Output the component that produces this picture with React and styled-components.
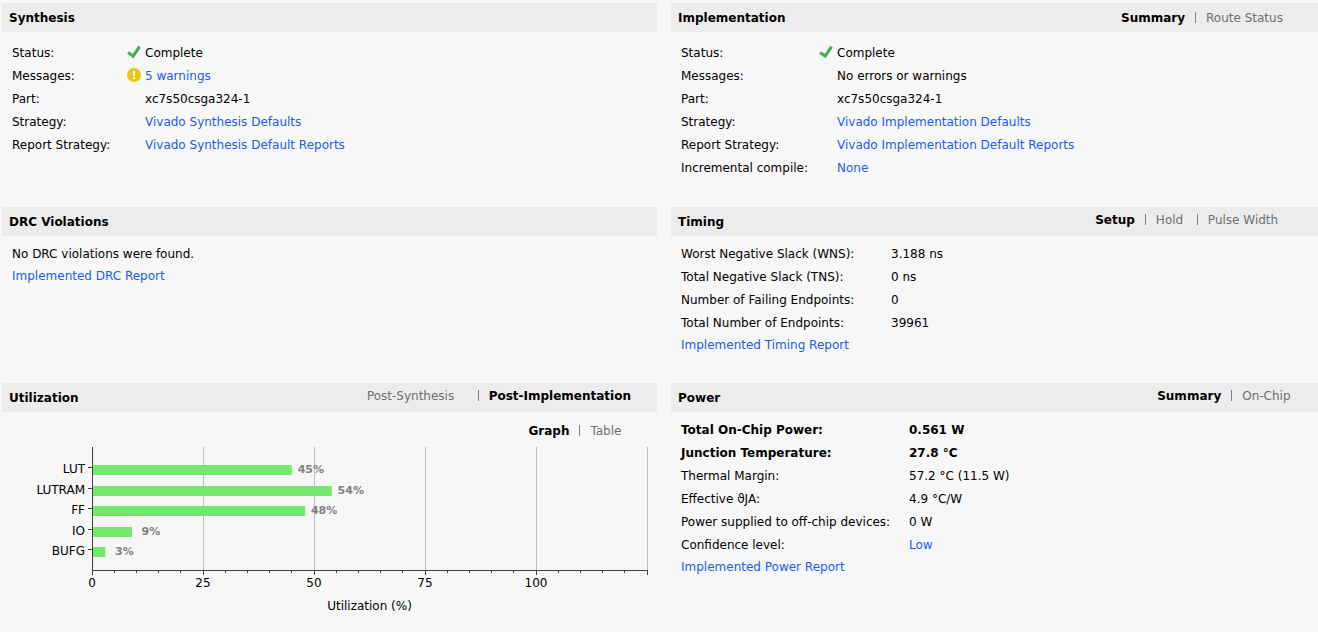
import React, { useState } from "react";
import styled, { createGlobalStyle } from "styled-components";

const GlobalStyle = createGlobalStyle`
  * { box-sizing: border-box; }
  body {
    margin: 0;
    background: #f7f7f7;
    color: #000;
    font: 12px/23px "DejaVu Sans", Verdana, sans-serif;
  }
`;

const Dashboard = styled.main`
  display: grid;
  grid-template-columns: 655fr 647fr;
  grid-template-rows: minmax(204px, auto) minmax(176px, auto) auto;
  column-gap: 14px;
  padding: 3px 0 0 2px;
`;

const Panel = styled.section`
  min-width: 0;
`;

const PanelHeader = styled.header`
  display: flex;
  justify-content: space-between;
  height: 29px;
  padding-left: 7px;
  background: #ececec;
`;

const Title = styled.h2`
  margin: 0;
  padding-top: 2px;
  font-size: 12px;
  line-height: 27px;
`;

const TabBar = styled.nav`
  display: flex;
  justify-content: flex-end;
  align-items: center;
  height: ${(p) => p.$height}px;
  padding-right: ${(p) => p.$inset}px;
`;

const Divider = styled.span`
  width: 1px;
  height: 11px;
  margin: 0 10px;
  background: #7c8084;
`;

/* The hidden bold copy keeps a tab's width the same in both states. */
const Tab = styled.button`
  display: inline-grid;
  padding: 2px 0 0;
  border: 0;
  background: none;
  font: inherit;
  line-height: 19px;
  text-align: left;
  cursor: pointer;
  font-weight: ${(p) => (p.$active ? 700 : 400)};
  color: ${(p) => (p.$active ? "#000" : "#6e6e6e")};

  &::after {
    content: attr(data-label);
    height: 0;
    overflow: hidden;
    visibility: hidden;
    font-weight: 700;
  }
`;

const PanelBody = styled.div`
  padding: ${(p) => p.$top}px 0 0 10px;
`;

const Properties = styled.dl`
  display: grid;
  grid-template-columns: ${(p) => p.$label}px 1fr;
  margin: 0;
`;

const Name = styled.dt`
  white-space: nowrap;
  font-weight: ${(p) => (p.$strong ? 700 : 400)};
`;

const Value = styled.dd`
  display: flex;
  align-items: center;
  margin: 0;
  white-space: nowrap;
  font-weight: ${(p) => (p.$strong ? 700 : 400)};
`;

const IconSlot = styled.span`
  display: flex;
  flex: none;
  width: 18px;
  padding-bottom: 3px;
`;

const Link = styled.a`
  color: #1e5af5;
  text-decoration: none;
  &:hover { text-decoration: underline; }
`;

const Message = styled.p`
  margin: 0;
`;

const ReportLink = styled(Link)`
  display: block;
  width: fit-content;
  line-height: 20px;
`;

const Chart = styled.svg`
  display: block;
  max-width: 100%;
`;

const BarLabel = styled.text`
  font-size: 11px;
  font-weight: 700;
  fill: #808080;
`;

const CheckIcon = () => (
  <svg width="14" height="14" viewBox="0 0 14 14" role="img" aria-label="Complete">
    <path d="M1 7.4 6.2 11 12.5 1.6" fill="none" stroke="#3fb24f" strokeWidth="3.1" />
  </svg>
);

const WarningIcon = () => (
  <svg width="14" height="14" viewBox="0 0 14 14" role="img" aria-label="Warning">
    <circle cx="7" cy="7" r="7" fill="#ecc414" />
    <path d="M6 2.8H8L7.8 8H6.2Z" fill="#fff" />
    <rect x="6" y="9" width="2" height="2" fill="#fff" />
  </svg>
);

function Tabs({ items, initial, inset, height = 25, label }) {
  const [active, setActive] = useState(initial);
  return (
    <TabBar aria-label={label} $inset={inset} $height={height}>
      {items.map((item, i) => (
        <React.Fragment key={item}>
          {i > 0 && <Divider />}
          <Tab
            type="button"
            data-label={item}
            aria-pressed={item === active}
            $active={item === active}
            onClick={() => setActive(item)}
          >
            {item}
          </Tab>
        </React.Fragment>
      ))}
    </TabBar>
  );
}

function PropertyList({ rows, label, icons }) {
  return (
    <Properties $label={label}>
      {rows.map(({ name, value, icon, link, strong }) => (
        <React.Fragment key={name}>
          <Name $strong={strong}>{name}</Name>
          <Value $strong={strong}>
            {icons && <IconSlot>{icon}</IconSlot>}
            {link ? <Link href="#">{value}</Link> : value}
          </Value>
        </React.Fragment>
      ))}
    </Properties>
  );
}

const synthesis = [
  { name: "Status:", value: "Complete", icon: <CheckIcon /> },
  { name: "Messages:", value: "5 warnings", icon: <WarningIcon />, link: true },
  { name: "Part:", value: "xc7s50csga324-1" },
  { name: "Strategy:", value: "Vivado Synthesis Defaults", link: true },
  { name: "Report Strategy:", value: "Vivado Synthesis Default Reports", link: true },
];

const implementation = [
  { name: "Status:", value: "Complete", icon: <CheckIcon /> },
  { name: "Messages:", value: "No errors or warnings" },
  { name: "Part:", value: "xc7s50csga324-1" },
  { name: "Strategy:", value: "Vivado Implementation Defaults", link: true },
  { name: "Report Strategy:", value: "Vivado Implementation Default Reports", link: true },
  { name: "Incremental compile:", value: "None", link: true },
];

const timing = [
  { name: "Worst Negative Slack (WNS):", value: "3.188 ns" },
  { name: "Total Negative Slack (TNS):", value: "0 ns" },
  { name: "Number of Failing Endpoints:", value: "0" },
  { name: "Total Number of Endpoints:", value: "39961" },
];

const power = [
  { name: "Total On-Chip Power:", value: "0.561 W", strong: true },
  { name: "Junction Temperature:", value: "27.8 °C", strong: true },
  { name: "Thermal Margin:", value: "57.2 °C (11.5 W)" },
  { name: "Effective ϑJA:", value: "4.9 °C/W" },
  { name: "Power supplied to off-chip devices:", value: "0 W" },
  { name: "Confidence level:", value: "Low", link: true },
];

const utilization = [
  { name: "LUT", percent: 45 },
  { name: "LUTRAM", percent: 54 },
  { name: "FF", percent: 48 },
  { name: "IO", percent: 9 },
  { name: "BUFG", percent: 3 },
];

const AXIS = { left: 80, top: 6, bottom: 129, width: 555, max: 125 };
const scaleX = (v) => AXIS.left + (v * AXIS.width) / AXIS.max;

function UtilizationChart() {
  const ticks = Array.from({ length: 26 }, (_, i) => i * 5);
  return (
    <Chart width="640" height="180" viewBox="0 0 640 180" role="img" aria-label="Utilization by resource">
      <rect x={AXIS.left} y={AXIS.top} width={AXIS.width} height={AXIS.bottom - AXIS.top} fill="#f6f6f6" />
      <g shapeRendering="crispEdges">
        {[25, 50, 75, 100, 125].map((v) => (
          <rect key={v} x={scaleX(v)} y={AXIS.top} width="1" height={AXIS.bottom - AXIS.top} fill="#bdbdbd" />
        ))}
      </g>
      {utilization.map(({ name, percent }, i) => {
        const y = Math.round(24 + i * 20.5);
        return (
          <g key={name}>
            <rect x={AXIS.left + 1} y={y} width={scaleX(percent) - AXIS.left - 1} height="10" fill="#74e86b" />
            <rect x={AXIS.left - 4} y={y + 2} width="4" height="1" fill="#404040" />
            <text x={AXIS.left - 7} y={y + 8} textAnchor="end">{name}</text>
            <BarLabel x={scaleX(percent) + 19} y={y + 8} textAnchor="middle">{percent}%</BarLabel>
          </g>
        );
      })}
      <g shapeRendering="crispEdges" fill="#404040">
        <rect x={AXIS.left} y={AXIS.top} width="1" height={AXIS.bottom - AXIS.top} />
        <rect x={AXIS.left} y={AXIS.bottom} width={AXIS.width + 1} height="1" />
        {ticks.map((v) => (
          <rect key={v} x={Math.floor(scaleX(v))} y={AXIS.bottom} width="1" height={v % 25 ? 3 : 5} />
        ))}
      </g>
      {[0, 25, 50, 75, 100].map((v) => (
        <text key={v} x={scaleX(v)} y={AXIS.bottom + 17} textAnchor="middle">{v}</text>
      ))}
      <text x={AXIS.left + AXIS.width / 2} y={AXIS.bottom + 40} textAnchor="middle">Utilization (%)</text>
    </Chart>
  );
}

export default function App() {
  return (
    <>
      <GlobalStyle />
      <Dashboard>
        <Panel>
          <PanelHeader><Title>Synthesis</Title></PanelHeader>
          <PanelBody $top={10}><PropertyList rows={synthesis} label={115} icons /></PanelBody>
        </Panel>

        <Panel>
          <PanelHeader>
            <Title>Implementation</Title>
            <Tabs label="Implementation view" items={["Summary", "Route Status"]} initial="Summary" inset={24} height={29} />
          </PanelHeader>
          <PanelBody $top={10}><PropertyList rows={implementation} label={138} icons /></PanelBody>
        </Panel>

        <Panel>
          <PanelHeader><Title>DRC Violations</Title></PanelHeader>
          <PanelBody $top={7}>
            <Message>No DRC violations were found.</Message>
            <ReportLink href="#">Implemented DRC Report</ReportLink>
          </PanelBody>
        </Panel>

        <Panel>
          <PanelHeader>
            <Title>Timing</Title>
            <Tabs label="Timing view" items={["Setup", "Hold", "Pulse Width"]} initial="Setup" inset={29} />
          </PanelHeader>
          <PanelBody $top={7}>
            <PropertyList rows={timing} label={210} />
            <ReportLink href="#">Implemented Timing Report</ReportLink>
          </PanelBody>
        </Panel>

        <Panel>
          <PanelHeader>
            <Title>Utilization</Title>
            <Tabs label="Utilization stage" items={["Post-Synthesis", "Post-Implementation"]} initial="Post-Implementation" inset={26} />
          </PanelHeader>
          <PanelBody $top={8}>
            <Tabs label="Utilization view" items={["Graph", "Table"]} initial="Graph" inset={31} height={21} />
            <UtilizationChart />
          </PanelBody>
        </Panel>

        <Panel>
          <PanelHeader>
            <Title>Power</Title>
            <Tabs label="Power view" items={["Summary", "On-Chip"]} initial="Summary" inset={22} />
          </PanelHeader>
          <PanelBody $top={7}>
            <PropertyList rows={power} label={228} />
            <ReportLink href="#">Implemented Power Report</ReportLink>
          </PanelBody>
        </Panel>
      </Dashboard>
    </>
  );
}
